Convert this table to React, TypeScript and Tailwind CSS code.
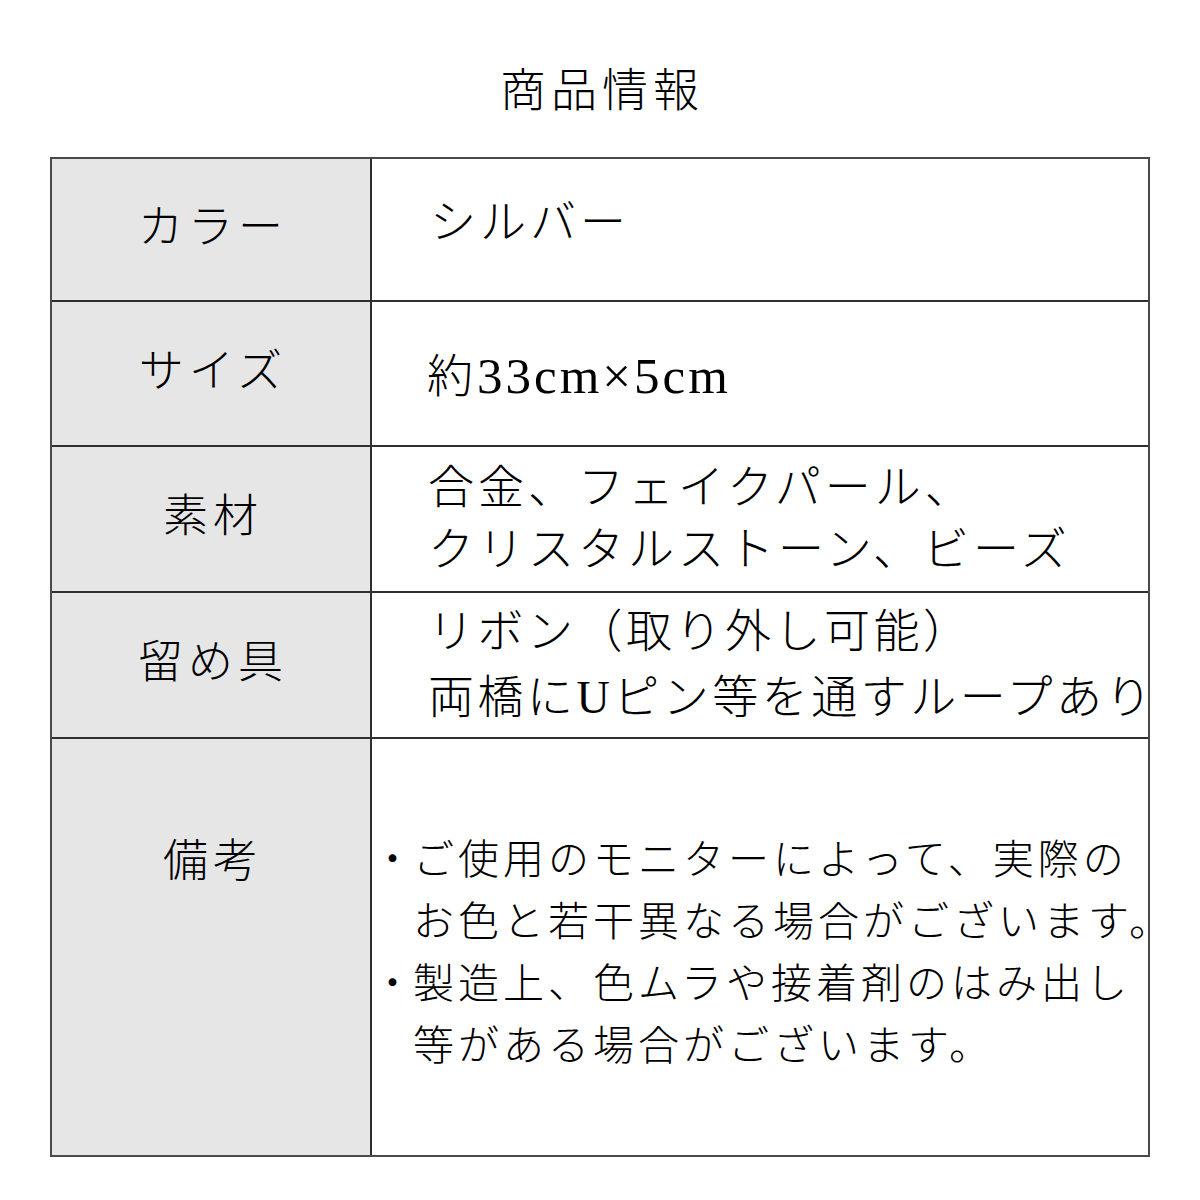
import React from "react";

const font = { fontFamily: '"Liberation Serif", "Noto Sans CJK JP", serif' };

function Row({
  label,
  h,
  last,
  children,
  labelTop,
}: {
  label: string;
  h: string;
  last?: boolean;
  children: React.ReactNode;
  labelTop?: boolean;
}) {
  return (
    <div className={`flex ${h} ${last ? "" : "border-b-2 border-[#2f2f2f]"}`}>
      <div
        className={`w-[320px] shrink-0 bg-[#e6e6e6] border-r-2 border-[#2f2f2f] flex justify-center ${
          labelTop ? "items-start pt-[90px]" : "items-center pb-[2px]"
        } text-[45px] tracking-[5px] pl-[4px] text-black font-light`}
      >
        {label}
      </div>
      {children}
    </div>
  );
}

export default function App() {
  return (
    <div className="w-[1200px] h-[1200px] bg-white text-black" style={font}>
      <div className="h-[157px] flex items-center justify-center pt-[24px] pl-[4px] text-[46px] tracking-[5px] font-light">
        商品情報
      </div>
      <div className="mx-[50px] w-[1100px] h-[1000px] border-2 border-[#4a4a4a] flex flex-col">
        <Row label="カラー" h="h-[143px]">
          <div className="flex-1 flex items-center pl-[58px] pb-[14px] text-[46px] tracking-[4px] font-light whitespace-nowrap">
            シルバー
          </div>
        </Row>
        <Row label="サイズ" h="h-[145px]">
          <div className="flex-1 flex items-center pl-[55px] pt-[6px] text-[46px] tracking-[4px] font-light whitespace-nowrap">
            約<span className="text-[51px] tracking-[3px]">33cm×5cm</span>
          </div>
        </Row>
        <Row label="素材" h="h-[146px]">
          <div className="flex-1 flex flex-col justify-center pl-[56px] text-[46px] tracking-[4px] font-light leading-[62px] whitespace-nowrap">
            <div>合金、フェイクパール、</div>
            <div>クリスタルストーン、ビーズ</div>
          </div>
        </Row>
        <Row label="留め具" h="h-[146px]">
          <div className="flex-1 flex flex-col justify-center pl-[56px] text-[46px] tracking-[3.5px] font-light leading-[66px] whitespace-nowrap">
            <div>リボン（取り外し可能）</div>
            <div>両橋にUピン等を通すループあり</div>
          </div>
        </Row>
        <Row label="備考" h="flex-1" last labelTop>
          <div className="flex-1 flex flex-col justify-center pt-[12px] text-[41px] tracking-[4px] font-light leading-[62px] whitespace-nowrap">
            <div className="flex">
              <span className="w-[41px] shrink-0 text-center">・</span>
              <div>
                <div>ご使用のモニターによって、実際の</div>
                <div>お色と若干異なる場合がございます。</div>
              </div>
            </div>
            <div className="flex">
              <span className="w-[41px] shrink-0 text-center">・</span>
              <div>
                <div>製造上、色ムラや接着剤のはみ出し</div>
                <div>等がある場合がございます。</div>
              </div>
            </div>
          </div>
        </Row>
      </div>
    </div>
  );
}
